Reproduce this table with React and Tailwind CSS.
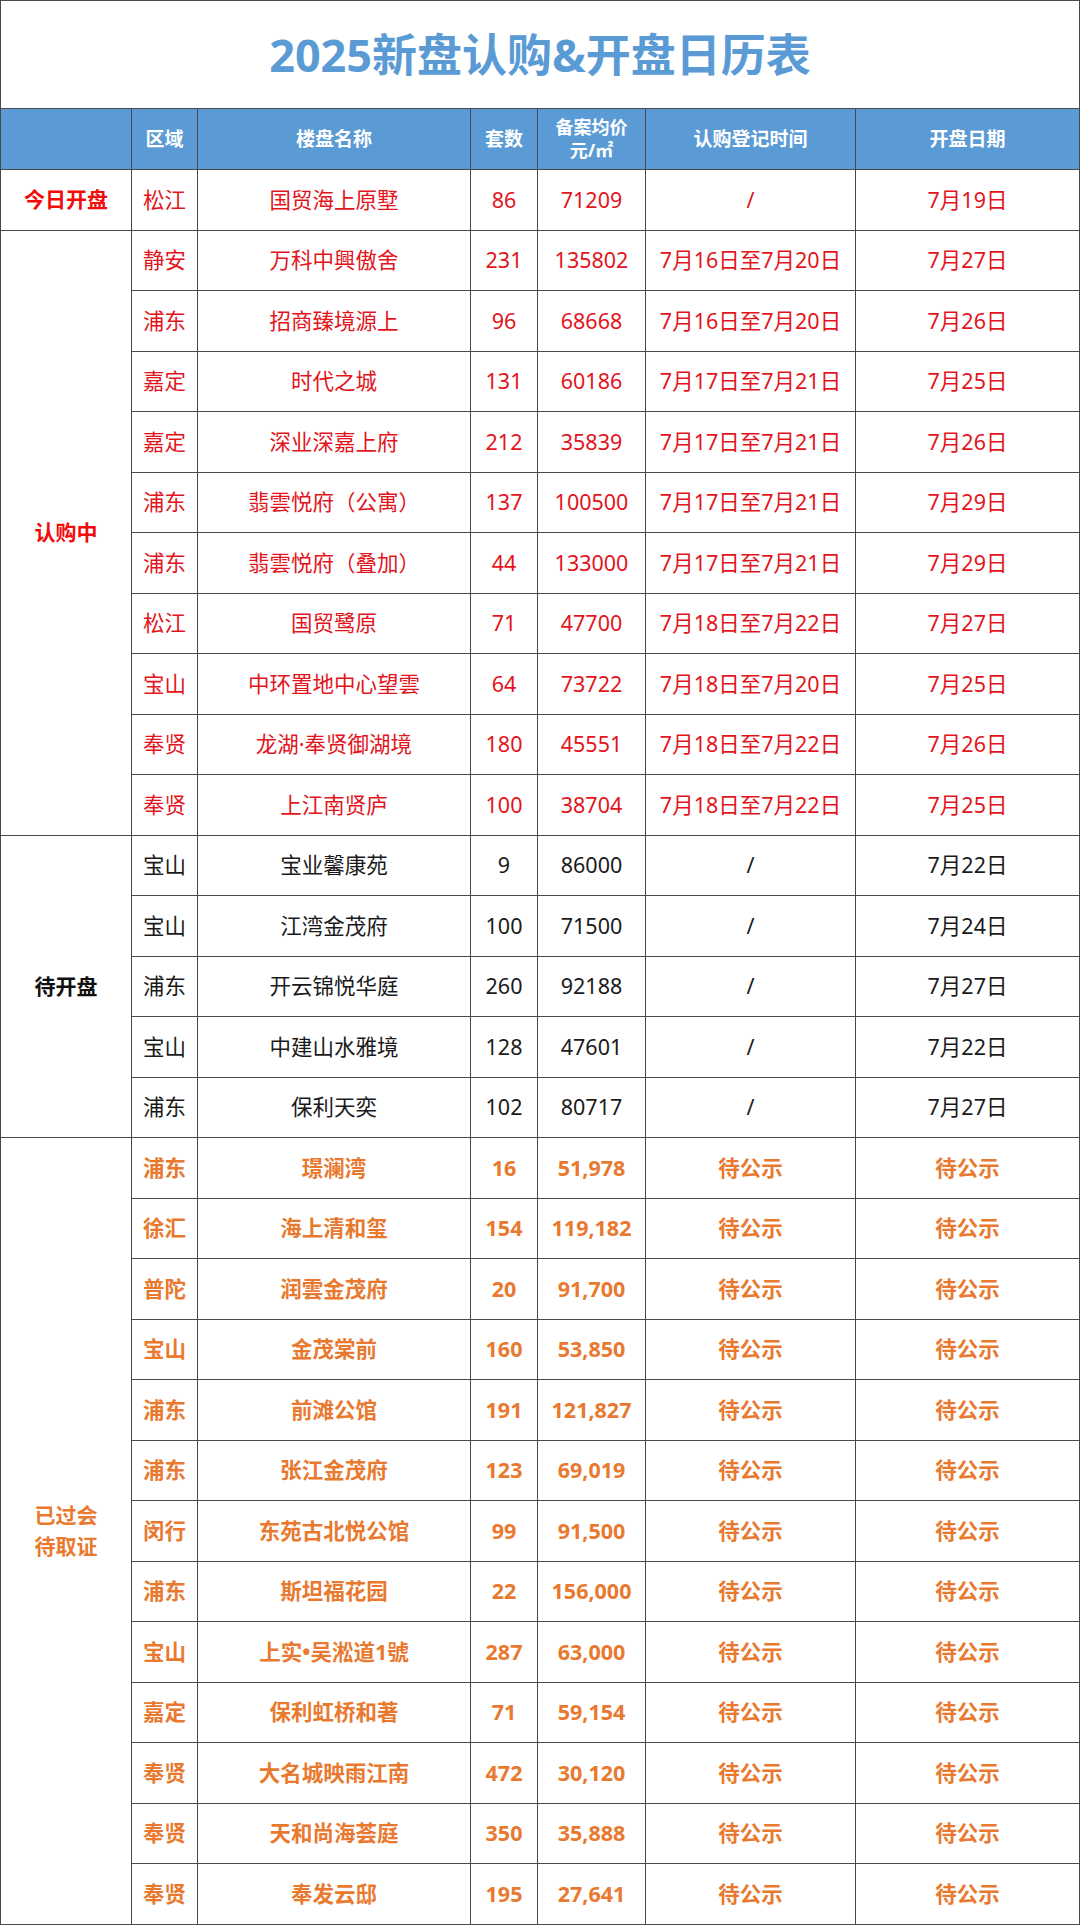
import React from "react";

const groups = [
  {
    label: ["今日开盘"],
    labelCls: "text-[#f20c0c] font-bold",
    cellCls: "text-[#e3141c]",
    rows: [["松江", "国贸海上原墅", "86", "71209", "/", "7月19日"]],
  },
  {
    label: ["认购中"],
    labelCls: "text-[#f20c0c] font-bold",
    cellCls: "text-[#e3141c]",
    rows: [
      ["静安", "万科中興傲舍", "231", "135802", "7月16日至7月20日", "7月27日"],
      ["浦东", "招商臻境源上", "96", "68668", "7月16日至7月20日", "7月26日"],
      ["嘉定", "时代之城", "131", "60186", "7月17日至7月21日", "7月25日"],
      ["嘉定", "深业深嘉上府", "212", "35839", "7月17日至7月21日", "7月26日"],
      ["浦东", "翡雲悦府（公寓）", "137", "100500", "7月17日至7月21日", "7月29日"],
      ["浦东", "翡雲悦府（叠加）", "44", "133000", "7月17日至7月21日", "7月29日"],
      ["松江", "国贸鹭原", "71", "47700", "7月18日至7月22日", "7月27日"],
      ["宝山", "中环置地中心望雲", "64", "73722", "7月18日至7月20日", "7月25日"],
      ["奉贤", "龙湖·奉贤御湖境", "180", "45551", "7月18日至7月22日", "7月26日"],
      ["奉贤", "上江南贤庐", "100", "38704", "7月18日至7月22日", "7月25日"],
    ],
  },
  {
    label: ["待开盘"],
    labelCls: "text-[#111] font-bold",
    cellCls: "text-[#1a1a1a]",
    rows: [
      ["宝山", "宝业馨康苑", "9", "86000", "/", "7月22日"],
      ["宝山", "江湾金茂府", "100", "71500", "/", "7月24日"],
      ["浦东", "开云锦悦华庭", "260", "92188", "/", "7月27日"],
      ["宝山", "中建山水雅境", "128", "47601", "/", "7月22日"],
      ["浦东", "保利天奕", "102", "80717", "/", "7月27日"],
    ],
  },
  {
    label: ["已过会", "待取证"],
    labelCls: "text-[#e8792f] font-bold",
    cellCls: "text-[#e8792f] font-bold",
    rows: [
      ["浦东", "璟澜湾", "16", "51,978", "待公示", "待公示"],
      ["徐汇", "海上清和玺", "154", "119,182", "待公示", "待公示"],
      ["普陀", "润雲金茂府", "20", "91,700", "待公示", "待公示"],
      ["宝山", "金茂棠前", "160", "53,850", "待公示", "待公示"],
      ["浦东", "前滩公馆", "191", "121,827", "待公示", "待公示"],
      ["浦东", "张江金茂府", "123", "69,019", "待公示", "待公示"],
      ["闵行", "东苑古北悦公馆", "99", "91,500", "待公示", "待公示"],
      ["浦东", "斯坦福花园", "22", "156,000", "待公示", "待公示"],
      ["宝山", "上实•吴淞道1號", "287", "63,000", "待公示", "待公示"],
      ["嘉定", "保利虹桥和著", "71", "59,154", "待公示", "待公示"],
      ["奉贤", "大名城映雨江南", "472", "30,120", "待公示", "待公示"],
      ["奉贤", "天和尚海荟庭", "350", "35,888", "待公示", "待公示"],
      ["奉贤", "奉发云邸", "195", "27,641", "待公示", "待公示"],
    ],
  },
];

const spanCls = {
  1: "row-span-1",
  5: "row-span-5",
  10: "row-span-10",
  13: "row-span-13",
};

export default function App() {
  const font = { fontFamily: '"Noto Sans", "Noto Sans CJK SC", sans-serif' };
  return (
    <div className="w-[1080px] h-[1927px] bg-white" style={font}>
      <div className="w-[1080px] border border-[#4a4a4a] bg-white">
        <div className="h-[107px] flex items-center justify-center">
          <div className="text-[45px] font-bold text-[#5b9bd5] leading-none">
            2025新盘认购&amp;开盘日历表
          </div>
        </div>
        <div className="grid grid-cols-[130px_65px_272px_66px_107px_209px_1fr] grid-rows-[60px] auto-rows-[59.5px] gap-px bg-[#4a4a4a] border-t border-[#4a4a4a]">
          <div className="bg-[#5b9bd5]" />
          {["区域", "楼盘名称", "套数"].map((h) => (
            <div key={h} className="bg-[#5b9bd5] flex items-center justify-center text-white font-bold text-[19px]">
              {h}
            </div>
          ))}
          <div className="bg-[#5b9bd5] flex flex-col items-center justify-center text-white font-bold text-[18px] leading-[23px]">
            <span className="block">备案均价</span>
            <span className="block">元/㎡</span>
          </div>
          {["认购登记时间", "开盘日期"].map((h) => (
            <div key={h} className="bg-[#5b9bd5] flex items-center justify-center text-white font-bold text-[19px]">
              {h}
            </div>
          ))}
          {groups.map((g, gi) =>
            g.rows.map((r, ri) => (
              <React.Fragment key={gi + "-" + ri}>
                {ri === 0 && (
                  <div
                    className={`${spanCls[g.rows.length]} bg-white flex flex-col items-center justify-center text-[21px] leading-[31px] ${g.labelCls}`}
                  >
                    {g.label.map((l) => (
                      <span key={l} className="block">{l}</span>
                    ))}
                  </div>
                )}
                {r.map((c, ci) => (
                  <div
                    key={ci}
                    className={`bg-white flex items-center justify-center text-[21.5px] whitespace-nowrap ${g.cellCls}`}
                  >
                    {c}
                  </div>
                ))}
              </React.Fragment>
            ))
          )}
        </div>
      </div>
    </div>
  );
}
